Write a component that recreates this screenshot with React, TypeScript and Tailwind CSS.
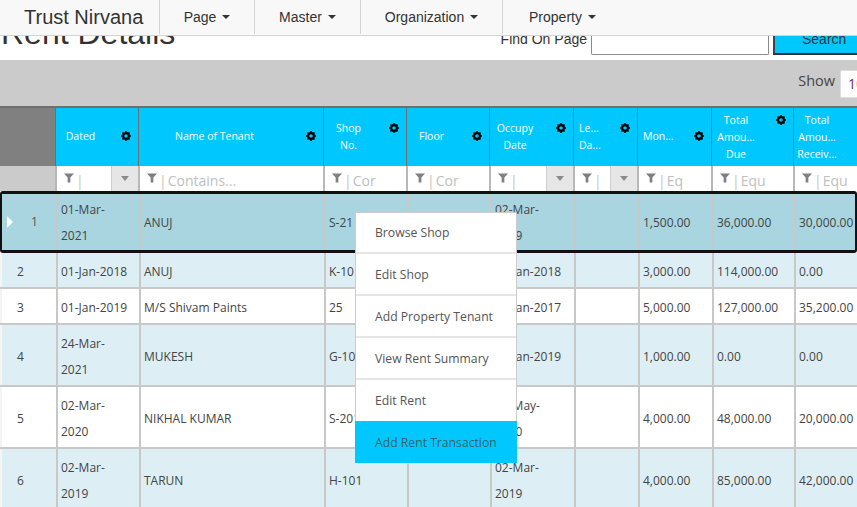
const widths = [55, 83, 185, 83, 83, 84, 64, 74, 82, 90];
const cols = widths.map((w) => `${w}px`).join(" ");

function Gear({ className = "" }: { className?: string }) {
  return (
    <svg viewBox="0 0 10 10" width="10" height="10" className={className}>
      <circle cx="5" cy="5" r="2.9" fill="none" stroke="#000" strokeWidth="2.2" />
      <g stroke="#000" strokeWidth="1.6">
        <path d="M5 0v2M5 8v2M0 5h2M8 5h2M1.5 1.5l1.3 1.3M7.2 7.2l1.3 1.3M8.5 1.5L7.2 2.8M2.8 7.2L1.5 8.5" />
      </g>
    </svg>
  );
}

function Caret() {
  return <span className="inline-block ml-[6px] align-middle w-0 h-0 border-x-[4px] border-x-transparent border-t-[4px] border-t-[#333]" />;
}

function FilterIcon() {
  return (
    <svg viewBox="0 0 11 10" width="10" height="10" className="shrink-0 mt-[-1px]">
      <path d="M0 0h11L7 4.5V10H4V4.5z" fill="#808080" />
    </svg>
  );
}

const headers: { lines: string[]; gear: string; align?: string; pr?: number }[] = [
  { lines: ["Dated"], gear: "top-[23px]" },
  { lines: ["Name of Tenant"], gear: "top-[23px]" },
  { lines: ["Shop", "No."], gear: "top-[15px]" },
  { lines: ["Floor"], gear: "top-[23px]" },
  { lines: ["Occupy", "Date"], gear: "top-[15px]" },
  { lines: ["Le...", "Da..."], gear: "top-[15px]", align: "left" },
  { lines: ["Mon..."], gear: "top-[23px]", align: "left" },
  { lines: ["Total", "Amou...", "Due"], gear: "top-[7px]" },
  { lines: ["Total", "Amou...", "Receiv..."], gear: "hidden", pr: 43 },
];

const filters: { text: string; drop?: boolean }[] = [
  { text: "", drop: true },
  { text: "Contains..." },
  { text: "Cor" },
  { text: "Cor" },
  { text: "", drop: true },
  { text: "", drop: true },
  { text: "Eq" },
  { text: "Equ" },
  { text: "Equ" },
];

type Row = { n: number; h: number; cells: string[][]; bg: string };
const rows: Row[] = [
  { n: 2, h: 36, bg: "bg-[#ddeff4]", cells: [["01-Jan-2018"], ["ANUJ"], ["K-101"], [""], ["01-Jan-2018"], [""], ["3,000.00"], ["114,000.00"], ["0.00"]] },
  { n: 3, h: 36, bg: "bg-white", cells: [["01-Jan-2019"], ["M/S Shivam Paints"], ["25"], [""], ["01-Jan-2017"], [""], ["5,000.00"], ["127,000.00"], ["35,200.00"]] },
  { n: 4, h: 62, bg: "bg-[#ddeff4]", cells: [["24-Mar-", "2021"], ["MUKESH"], ["G-101"], [""], ["01-Jan-2019"], [""], ["1,000.00"], ["0.00"], ["0.00"]] },
  { n: 5, h: 62, bg: "bg-white", cells: [["02-Mar-", "2020"], ["NIKHAL KUMAR"], ["S-201"], [""], ["02-May-", "2020"], [""], ["4,000.00"], ["48,000.00"], ["20,000.00"]] },
  { n: 6, h: 62, bg: "bg-[#ddeff4]", cells: [["02-Mar-", "2019"], ["TARUN"], ["H-101"], [""], ["02-Mar-", "2019"], [""], ["4,000.00"], ["85,000.00"], ["42,000.00"]] },
];
const selected = [["01-Mar-", "2021"], ["ANUJ"], ["S-21"], [""], ["02-Mar-", "2019"], [""], ["1,500.00"], ["36,000.00"], ["30,000.00"]];
const menu = ["Browse Shop", "Edit Shop", "Add Property Tenant", "View Rent Summary", "Edit Rent", "Add Rent Transaction"];

function Cell({ lines, top }: { lines: string[]; top: string }) {
  return (
    <div className={`ml-px border-l-2 border-[#c8c8c8] flex flex-col justify-center pl-[3px] overflow-hidden whitespace-nowrap leading-[26px] ${top}`}>
      {lines.map((l, i) => (
        <span key={i}>{l}</span>
      ))}
    </div>
  );
}

export default function App() {
  return (
    <div className="relative w-[857px] h-[507px] overflow-hidden bg-white text-[#333] font-['Liberation_Sans',sans-serif]">
      <nav className="h-[36px] bg-[#f8f8f8] border-b border-[#d4d4d4] flex text-[14px] relative z-10">
        <div className="w-[159px] h-[34px] pl-[24px] text-[20px] leading-[34px] text-[#333]">Trust Nirvana</div>
        {[
          ["Page", 95],
          ["Master", 106],
          ["Organization", 142],
          ["Property", 120],
        ].map(([t, w]) => (
          <div
            key={t as string}
            style={{ width: w as number }}
            className="h-[34px] border-l border-[#d4d4d4] flex items-center justify-center"
          >
            {t}
            <Caret />
          </div>
        ))}
      </nav>

      <div className="h-[24px] overflow-hidden flex relative">
        <div className="text-[32px] leading-[36px] mt-[-21px] pl-[1px] whitespace-nowrap">Rent Details</div>
        <div className="ml-auto flex items-start">
          <span className="text-[14px] leading-[20px] mt-[-7px] mr-[4px]">Find On Page</span>
          <div className="w-[178px] h-[19px] border-x border-b border-[#8a8a8a] rounded-b-[2px] bg-white mr-[4px]" />
          <div className="w-[84px] h-[19px] bg-[#00c8ff] border-l-2 border-b-2 border-[#333] border-l-[#444] text-[14px] leading-[7px] pl-[27px]">Search</div>
        </div>
      </div>

      <div className="h-[46px] bg-[#cbcbcb] flex items-center justify-end font-['Open_Sans',sans-serif]">
        <span className="text-[14.5px] mr-[5px] mb-[5px] text-[#444]">Show</span>
        <div className="w-[17px] h-[28px] mb-[-1px] bg-white border-y border-l border-[#ddd] rounded-l-[2px] pl-[7px] text-[14px] leading-[26px] overflow-hidden whitespace-nowrap">
          <span className="text-[#7a1f5c]">1</span>
          <span className="text-[#f0a020]">0</span>
        </div>
      </div>

      <div className="font-['Open_Sans',sans-serif] text-[12px] text-[#444]">
        <div className="grid h-[60px] bg-[#00c8ff] border-t-2 border-[#6f6f6f] text-white text-[10.5px] leading-[17px]" style={{ gridTemplateColumns: cols }}>
          <div className="bg-[#808080]" />
          {headers.map((h, i) => (
            <div
              key={i}
              className="relative border-l border-[#6f6f6f] flex flex-col justify-center overflow-hidden whitespace-nowrap"
              style={{
                alignItems: h.align === "left" ? "flex-start" : "center",
                paddingLeft: h.align === "left" ? 5 : 0,
                paddingRight: h.align === "left" ? 0 : h.pr ?? 33,
                paddingBottom: h.lines.length === 1 ? 2 : 0,
              }}
            >
              {h.lines.map((l, j) => (
                <span key={j}>{l}</span>
              ))}
              <Gear className={`absolute right-[7px] ${h.gear}`} />
            </div>
          ))}
        </div>

        <div className="grid h-[25px] bg-[#cbcbcb] text-[14px] text-[#bdbdbd]" style={{ gridTemplateColumns: cols }}>
          <div className="border-r border-[#6f6f6f] w-[56px]" />
          {filters.map((f, i) => (
            <div key={i} className="bg-white border-l-2 border-[#b8b8b8] flex items-center pl-[7px] overflow-hidden whitespace-nowrap relative">
              <FilterIcon />
              <span className="ml-[2px] mt-[4px] text-[#c4c4c4]">|</span>
              <span className="ml-[1px] mt-[4px] text-[#c0c0c0]">{f.text}</span>
              {f.drop && (
                <div className="absolute right-0 inset-y-0 w-[27px] bg-[#e6e6e6] border-l border-[#cfcfcf] flex items-center justify-center">
                  <span className="w-0 h-0 border-x-[4px] border-x-transparent border-t-[5px] border-t-[#8a8a8a]" />
                </div>
              )}
            </div>
          ))}
        </div>

        <div className="grid h-[62px] bg-[#a8d5e0] border-y-[3px] border-x-2 border-[#111] rounded-[3px]" style={{ gridTemplateColumns: "53px 83px 185px 83px 83px 84px 64px 74px 82px 90px" }}>
          <div className="relative flex items-center justify-center pl-[12px] text-[#555]">
            <span className="absolute left-[5px] w-0 h-0 border-y-[6px] border-y-transparent border-l-[6px] border-l-white" />
            1
          </div>
          {selected.map((c, i) => (
            <Cell key={i} lines={c} top="pt-[2px]" />
          ))}
        </div>

        {rows.map((r) => (
          <div key={r.n} className={`grid border-b-2 border-[#c8c8c8] ${r.bg}`} style={{ gridTemplateColumns: cols, height: r.h }}>
            <div className="flex items-center pl-[15px] pt-[3px] border-l-2 border-[#f4f4f4]">{r.n}</div>
            {r.cells.map((c, i) => (
              <Cell key={i} lines={c} top="pt-[3px]" />
            ))}
          </div>
        ))}
      </div>

      <ul className="absolute left-[355px] top-[212px] w-[162px] bg-white border-x border-t border-[#ccc] font-['Open_Sans',sans-serif] text-[12.2px] text-[#555]">
        {menu.map((m, i) => (
          <li
            key={m}
            className={`pl-[19px] pt-[2px] flex items-center ${i === 0 ? "h-[41px]" : i === 4 ? "h-[41px]" : "h-[42px]"} ${i === 5 ? "bg-[#00c8ff] -mx-px text-[#3b5f6b] pl-[20px]" : i < 4 ? "border-b-2 border-[#e6e6e6]" : ""}`}
          >
            {m}
          </li>
        ))}
      </ul>
    </div>
  );
}
